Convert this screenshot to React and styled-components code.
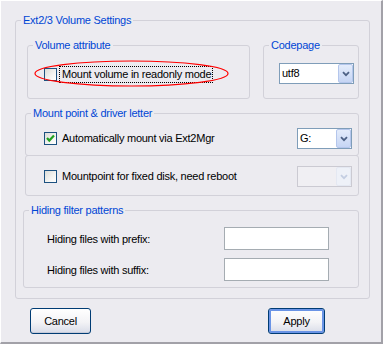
import React from 'react'
import styled, { createGlobalStyle } from 'styled-components'

const GlobalStyle = createGlobalStyle`
	html, body {
		margin: 0;
		padding: 0;
		background: #ECEBF0;
	}
	body {
		font-family: "Liberation Sans", Arial, sans-serif;
		font-size: 11px;
		letter-spacing: -0.25px;
		color: #000;
	}
`

const Chevron = ({ color }) => (
	<svg width='8' height='6' viewBox='0 0 8 6'>
		<path d='M1 1.2 L4 4.2 L7 1.2' fill='none' stroke={color} strokeWidth='1.8'/>
	</svg>
)

const Check = () => (
	<svg width='11' height='11' viewBox='0 0 11 11'>
		<path d='M2 5 L4.3 7.6 L9 2.6' fill='none' stroke='#21A121' strokeWidth='2.2'/>
	</svg>
)

function CheckItem ({ checked, focused, children }) {
	return (
		<Row>
			<Box>{checked && <Check/>}</Box>
			<Label $focused={focused}>{children}</Label>
		</Row>
	)
}

function ComboBox ({ value, width, disabled }) {
	return (
		<Combo $w={width} $disabled={disabled}>
			<ComboText>{value}</ComboText>
			<ComboButton $disabled={disabled}>
				<Chevron color={disabled ? '#C4CEE2' : '#4D6185'}/>
			</ComboButton>
		</Combo>
	)
}

export default function App () {
	return (
		<>
			<GlobalStyle/>
			<Window>
				<Group>
					<Caption>Ext2/3 Volume Settings</Caption>
					<OuterBody>
						<TopRow>
							<Group $w={223} $h={61}>
								<Caption>Volume attribute</Caption>
								<Body $pad='14px 0 0 16px'>
									<Annotated>
										<CheckItem focused>Mount volume in readonly mode</CheckItem>
										<Ellipse width='196' height='28' viewBox='0 0 196 28'>
											<ellipse cx='97.5' cy='13.5' rx='96.5' ry='12.5' fill='none' stroke='#FF0000' strokeWidth='1.2'/>
										</Ellipse>
									</Annotated>
								</Body>
							</Group>
							<Group $w={96} $h={61}>
								<Caption>Codepage</Caption>
								<Body $pad='11px 0 0 15px'>
									<ComboBox value='utf8' width={75}/>
								</Body>
							</Group>
						</TopRow>

						<Group $offset={-2} $top={7} $h={50}>
							<Caption>Mount point &amp; driver letter</Caption>
							<Body $pad='8px 6px 0 18px'>
								<OptionRow>
									<CheckItem checked>Automatically mount via Ext2Mgr</CheckItem>
									<ComboBox value='G:' width={55}/>
								</OptionRow>
							</Body>
						</Group>
						<Frame $offset={-2}>
							<OptionRow>
								<CheckItem>Mountpoint for fixed disk, need reboot</CheckItem>
								<ComboBox value='' width={55} disabled/>
							</OptionRow>
						</Frame>

						<Group $offset={-4} $top={7} $h={85}>
							<Caption>Hiding filter patterns</Caption>
							<Body $pad='10px 0 0 23px'>
								<FieldGrid>
									<span>Hiding files with prefix:</span>
									<TextInput/>
									<span>Hiding files with suffix:</span>
									<TextInput/>
								</FieldGrid>
							</Body>
						</Group>
					</OuterBody>
				</Group>

				<ButtonBar>
					<Button $w={61}>Cancel</Button>
					<Button $w={57} $default>Apply</Button>
				</ButtonBar>
			</Window>
		</>
	)
}

const Window = styled.div`
	box-sizing: border-box;
	width: 383px;
	height: 344px;
	padding: 12px 11px 0 14px;
	background: #ECEBF0;
	border-top: 1px solid #FFFFFF;
	border-left: 1px solid #FFFFFF;
	border-right: 2px solid #A2A1A8;
	border-bottom: 2px solid #A2A1A8;
`

const Group = styled.fieldset`
	box-sizing: border-box;
	min-width: 0;
	margin: ${p => p.$top || 0}px 0 0 ${p => p.$offset || 0}px;
	padding: 0;
	width: ${p => p.$w ? `${p.$w}px` : 'auto'};
	height: ${p => p.$h ? `${p.$h}px` : 'auto'};
	border: 1px solid #D2D1D9;
	border-radius: 3px;
`

const Caption = styled.legend`
	height: 14px;
	margin-left: 5px;
	padding: 0 2px;
	line-height: 14px;
	color: #0046D5;
`

const OuterBody = styled.div`
	padding: 11px 10px 10px 11px;
`

const Body = styled.div`
	padding: ${p => p.$pad};
`

const TopRow = styled.div`
	display: flex;
	gap: 13px;
`

const Frame = styled.div`
	box-sizing: border-box;
	height: 41px;
	margin: -1px 0 0 ${p => p.$offset || 0}px;
	padding: 10px 6px 0 18px;
	border: 1px solid #D2D1D9;
	border-radius: 3px;
`

const OptionRow = styled.div`
	display: flex;
	align-items: center;
	justify-content: space-between;
	height: 21px;
`

const Annotated = styled.div`
	position: relative;
`

const Ellipse = styled.svg`
	position: absolute;
	left: -10px;
	top: -6px;
	pointer-events: none;
`

const Row = styled.div`
	display: flex;
	align-items: center;
	height: 17px;
`

const Box = styled.span`
	box-sizing: border-box;
	display: flex;
	align-items: center;
	justify-content: center;
	width: 13px;
	height: 13px;
	border: 1px solid #1C5180;
	background: linear-gradient(135deg, #DCDCD7 0%, #F4F4F2 60%, #FFFFFF 100%);
`

const Label = styled.span`
	margin-left: 2px;
	padding: 0 1px 0 2px;
	line-height: 15px;
	border: 1px ${p => p.$focused ? 'dotted #000' : 'solid transparent'};
`

const Combo = styled.div`
	box-sizing: border-box;
	display: flex;
	width: ${p => p.$w}px;
	height: 21px;
	border: 1px solid ${p => p.$disabled ? '#CBCAD2' : '#7F9DB9'};
	background: ${p => p.$disabled ? '#F0EFF3' : '#FFFFFF'};
`

const ComboText = styled.span`
	flex: 1;
	padding-left: 2px;
	line-height: 19px;
`

const ComboButton = styled.span`
	box-sizing: border-box;
	display: flex;
	align-items: center;
	justify-content: center;
	width: 15px;
	margin: 0 0 0 0;
	border: 1px solid ${p => p.$disabled ? '#E4E8F2' : '#B4C6EC'};
	border-radius: 2px;
	background: ${p => p.$disabled
		? '#EEF1F8'
		: 'linear-gradient(#E4ECFB, #C6D5F4)'};
`

const FieldGrid = styled.div`
	display: grid;
	grid-template-columns: 177px 105px;
	grid-auto-rows: 23px;
	row-gap: 8px;
	align-items: center;
`

const TextInput = styled.input`
	box-sizing: border-box;
	width: 105px;
	height: 23px;
	margin: 0;
	border: 1px solid #A5ACB2;
	background: #FFFFFF;
	outline: none;
`

const ButtonBar = styled.div`
	display: flex;
	justify-content: space-between;
	margin-top: 9px;
	padding: 0 45px 0 15px;
`

const Button = styled.button`
	box-sizing: border-box;
	width: ${p => p.$w}px;
	height: 26px;
	padding: 0;
	font: inherit;
	letter-spacing: -0.25px;
	color: #000;
	border: 1px solid #003C74;
	border-radius: 3px;
	background: linear-gradient(#FFFFFF 0%, #F3F3F6 55%, #D8DCE8 100%);
	box-shadow: ${p => p.$default ? 'inset 0 0 0 2px #6A94E6' : 'inset 0 -1px 0 #C6CBDA'};
`
